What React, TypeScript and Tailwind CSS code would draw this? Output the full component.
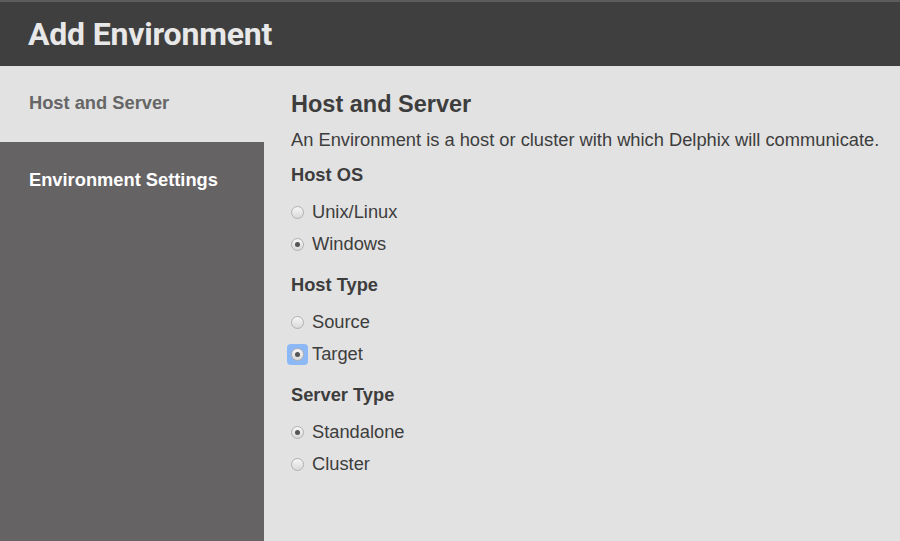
import React, { useState } from "react";

type Opt = { value: string; label: string };

function Radio({
  checked,
  focused,
  label,
  onSelect,
}: {
  checked: boolean;
  focused?: boolean;
  label: string;
  onSelect: () => void;
}) {
  return (
    <label className="flex h-8 items-center cursor-pointer" onClick={onSelect}>
      <span className="relative mr-[8px] flex h-[13px] w-[13px] items-center justify-center">
        {focused && (
          <span className="absolute -inset-[4px] rounded-[4px] bg-[#8cb8f5]" />
        )}
        <span className="relative flex h-[13px] w-[13px] items-center justify-center rounded-full border border-[#b0b0b0] bg-gradient-to-b from-[#f6f6f6] to-[#dadada]">
          {checked && <span className="h-[5px] w-[5px] rounded-full bg-[#555]" />}
        </span>
      </span>
      <span className="text-[18.3px] text-[#3d3d3d]">{label}</span>
    </label>
  );
}

function Group({
  title,
  options,
  value,
  focused,
  onChange,
}: {
  title: string;
  options: Opt[];
  value: string;
  focused?: boolean;
  onChange: (v: string) => void;
}) {
  return (
    <div className="mb-[13px]">
      <h3 className="mb-[9px] text-[18.3px] font-bold leading-[24px] text-[#3d3d3d]">{title}</h3>
      {options.map((o) => (
        <Radio
          key={o.value}
          label={o.label}
          checked={value === o.value}
          focused={focused && value === o.value}
          onSelect={() => onChange(o.value)}
        />
      ))}
    </div>
  );
}

export default function App() {
  const [os, setOs] = useState("windows");
  const [hostType, setHostType] = useState("target");
  const [serverType, setServerType] = useState("standalone");

  return (
    <div className="flex h-[541px] w-[900px] flex-col overflow-hidden bg-[#e2e2e2] font-['Liberation_Sans',Arial,sans-serif]">
      {/* header */}
      <header className="flex h-[66px] shrink-0 items-center border-t-2 border-[#5c5c5c] bg-[#3f3f3f] pl-[28px]">
        <h1 className="font-['Roboto',sans-serif] text-[32px] font-bold tracking-[-0.2px] text-[#e8e8e8]">
          Add Environment
        </h1>
      </header>

      <div className="flex flex-1">
        {/* wizard steps */}
        <nav className="flex w-[264px] shrink-0 flex-col bg-[#656364]">
          <div className="flex h-[76px] items-center bg-[#e2e2e2] pl-[29px] pb-[2px]">
            <span className="text-[18.3px] font-bold text-[#666]">Host and Server</span>
          </div>
          <div className="flex h-[76px] items-center pl-[29px]">
            <span className="text-[18.3px] font-bold text-white">Environment Settings</span>
          </div>
        </nav>

        {/* form */}
        <main className="flex-1 pl-[27px] pt-[25px]">
          <h2 className="text-[23.5px] font-bold leading-[26px] text-[#3d3d3d]">Host and Server</h2>
          <p className="mt-[13px] mb-[13px] text-[18.3px] leading-[20px] text-[#3d3d3d]">
            An Environment is a host or cluster with which Delphix will communicate.
          </p>
          <Group
            title="Host OS"
            value={os}
            onChange={setOs}
            options={[
              { value: "unix", label: "Unix/Linux" },
              { value: "windows", label: "Windows" },
            ]}
          />
          <Group
            title="Host Type"
            value={hostType}
            focused
            onChange={setHostType}
            options={[
              { value: "source", label: "Source" },
              { value: "target", label: "Target" },
            ]}
          />
          <Group
            title="Server Type"
            value={serverType}
            onChange={setServerType}
            options={[
              { value: "standalone", label: "Standalone" },
              { value: "cluster", label: "Cluster" },
            ]}
          />
        </main>
      </div>
    </div>
  );
}
